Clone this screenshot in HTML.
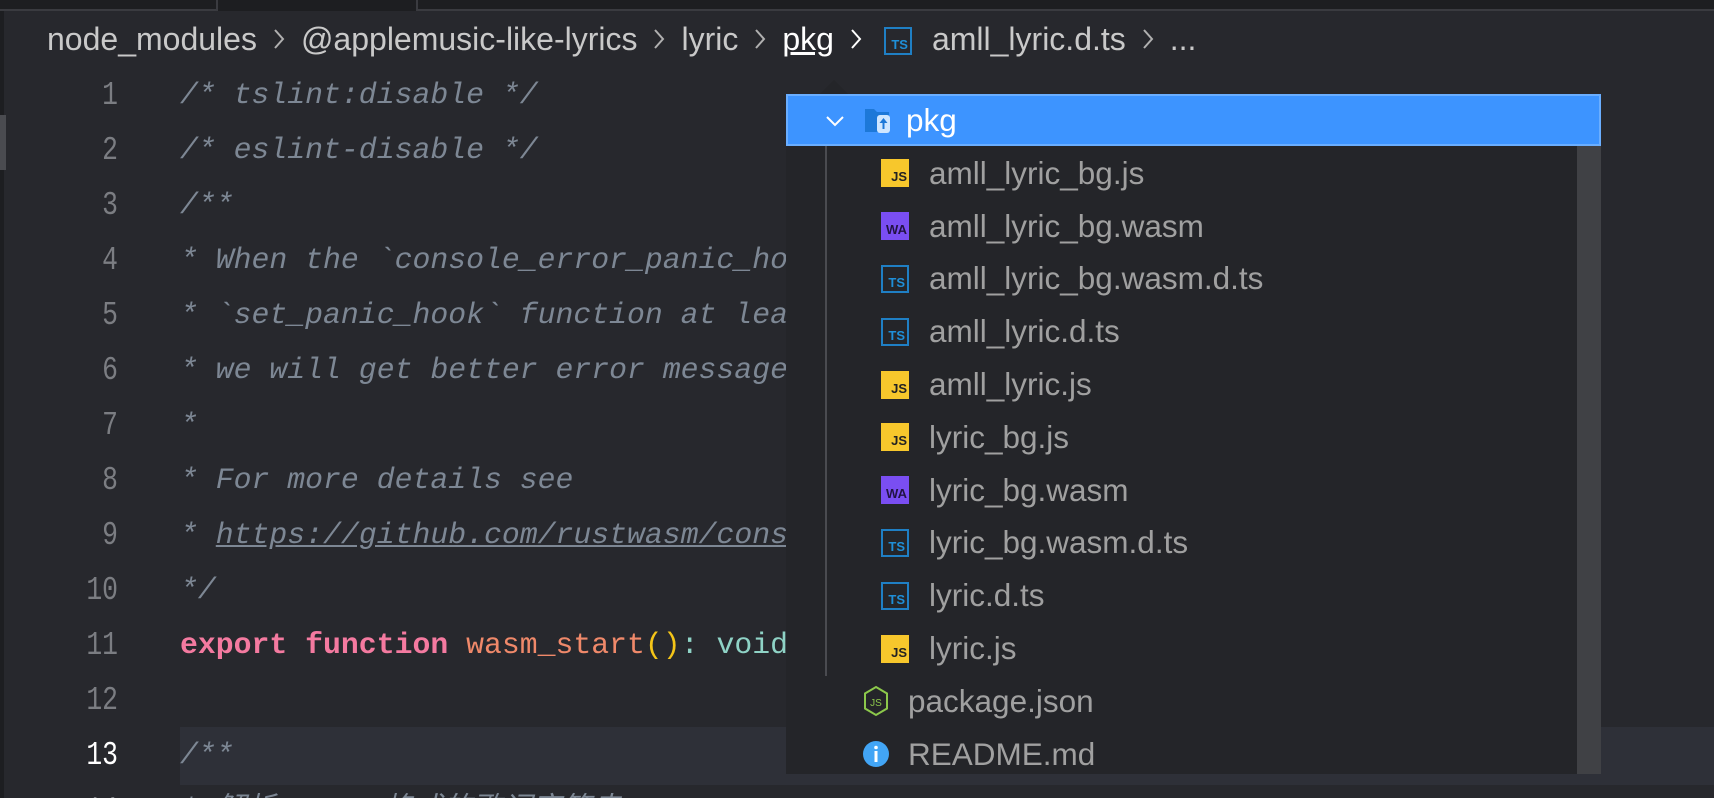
<!DOCTYPE html>
<html><head><meta charset="utf-8"><style>
*{margin:0;padding:0;box-sizing:border-box}
html,body{width:1714px;height:798px;overflow:hidden}
body{background:#27282d;position:relative;font-family:"Liberation Sans",sans-serif}
.abs{position:absolute}
.tabbar{left:0;top:0;width:1714px;height:11px;background:#1d1e21}
.crumb{top:19px;left:47px;height:40px;line-height:40px;font-size:32px;color:#c9c9c9;white-space:nowrap}
.sep{display:inline-block;width:44px;text-align:center;vertical-align:middle;position:relative;top:-3px}
.ln{left:30px;width:88px;height:730px;overflow:hidden;text-align:right;font-family:"Liberation Mono",monospace;font-size:33px;color:#7b7d82;transform:scaleX(.8);transform-origin:right}
.code{left:180px;height:730px;overflow:hidden;font-family:"Liberation Mono",monospace;font-style:italic;font-size:29.8px;color:#7d8794}
.code .row{white-space:pre}
.row{height:55px;line-height:55px}
.dd{left:786px;top:94px;width:815px;height:680px;background:#242529;overflow:hidden}
.sel{left:0;top:0;width:815px;height:52px;background:#3d94ff;border:2px solid #6aaeff}
.item{height:52.8px;line-height:52.8px;font-size:31.5px;color:#a0a0a0;white-space:nowrap}
.icon{display:inline-block;width:28px;height:28px;vertical-align:middle;margin-right:20px;position:relative;top:-2px;font-size:13px;font-weight:bold;text-align:right;line-height:36px;padding-right:2px;font-family:"Liberation Sans",sans-serif}
.js{background:#f7c72c;color:#222}
.ts{border:2px solid #1f7fc4;color:#1f8fd8;line-height:32px}
.wa{background:#7a4ef2;color:#221344}
</style></head><body>
<div class="abs tabbar"></div>
<div class="abs" style="left:0;top:0;width:218px;height:11px;border-right:2px solid #3a3b40;border-bottom:2px solid #3a3b40"></div>
<div class="abs" style="left:416px;top:0;width:1298px;height:11px;border-left:2px solid #3a3b40;border-bottom:2px solid #3a3b40"></div>
<div class="abs" style="left:0;top:11px;width:4px;height:787px;background:#1d1e21"></div>
<div class="abs" style="left:0;top:115px;width:6px;height:55px;background:#4a4b50"></div>

<div class="abs crumb">node_modules<span class="sep"><svg width="12" height="22" viewBox="0 0 12 22"><path d="M2 2l8 9-8 9" fill="none" stroke="#b0b0b0" stroke-width="2"/></svg></span>@applemusic-like-lyrics<span class="sep"><svg width="12" height="22" viewBox="0 0 12 22"><path d="M2 2l8 9-8 9" fill="none" stroke="#b0b0b0" stroke-width="2"/></svg></span>lyric<span class="sep"><svg width="12" height="22" viewBox="0 0 12 22"><path d="M2 2l8 9-8 9" fill="none" stroke="#b0b0b0" stroke-width="2"/></svg></span><span style="color:#fff;text-decoration:underline">pkg</span><span class="sep"><svg width="12" height="22" viewBox="0 0 12 22"><path d="M2 2l8 9-8 9" fill="none" stroke="#fff" stroke-width="2"/></svg></span><span class="icon ts" style="margin-right:20px;margin-left:6px;top:-1px">TS</span>amll_lyric.d.ts<span class="sep"><svg width="12" height="22" viewBox="0 0 12 22"><path d="M2 2l8 9-8 9" fill="none" stroke="#b0b0b0" stroke-width="2"/></svg></span>...</div>

<div class="abs" style="left:180px;top:727px;width:1534px;height:58px;background:#2e3038"></div>

<div class="abs ln" style="top:68px">
<div class="row">1</div><div class="row">2</div><div class="row">3</div><div class="row">4</div><div class="row">5</div><div class="row">6</div><div class="row">7</div><div class="row">8</div><div class="row">9</div><div class="row">10</div><div class="row">11</div><div class="row">12</div><div class="row" style="color:#fff">13</div><div class="row">14</div>
</div>
<div class="abs code" style="top:68px">
<div class="row">/* tslint:disable */</div>
<div class="row">/* eslint-disable */</div>
<div class="row">/**</div>
<div class="row">* When the `console_error_panic_hook`</div>
<div class="row">* `set_panic_hook` function at least</div>
<div class="row">* we will get better error messages</div>
<div class="row">*</div>
<div class="row">* For more details see</div>
<div class="row">* <span style="text-decoration:underline">https://github.com/rustwasm/console</span></div>
<div class="row">*/</div>
<div class="row" style="font-style:normal;font-weight:bold"><span style="color:#f47aa0">export function</span> <span style="color:#f0896a;font-weight:normal">wasm_start</span><span style="color:#f5c518;font-weight:normal">()</span><span style="color:#8fd3c6;font-weight:normal">: void</span></div>
<div class="row"> </div>
<div class="row">/**</div>
<div class="row" style="font-family:'Liberation Mono','Noto Sans CJK SC',monospace">* 解析 TTML 格式的歌词字符串</div>
</div>

<div class="abs" style="left:820px;top:80px;width:0;height:0;border-left:14px solid transparent;border-right:14px solid transparent;border-bottom:14px solid #242529"></div>
<div class="abs dd">
 <div class="abs sel"></div>
 <div class="abs" style="left:791px;top:52px;width:24px;height:628px;background:#404145"></div>
 <div class="abs" style="left:39px;top:52px;width:2px;height:530px;background:#4a4b50"></div>
 <div class="abs item" style="left:38px;top:0;color:#fff">
  <svg width="22" height="22" viewBox="0 0 22 22" style="vertical-align:middle;margin-right:18px;position:relative;top:-2px"><path d="M3 7 L11 15 L19 7" fill="none" stroke="#fff" stroke-width="2"/></svg><svg width="32" height="28" viewBox="0 0 32 28" style="vertical-align:middle;margin-right:10px;position:relative;top:-2px"><path d="M1 2h9l3 3h12v20H1z" fill="#1d78d8"/><rect x="13" y="8" width="13" height="18" rx="3" fill="#cfe6ff"/><path d="M19.5 11l-4 5h3v6h2v-6h3z" fill="#1d78d8"/></svg>pkg</div>
 <div class="abs" style="left:95px;top:52.8px">
  <div class="item"><span class="icon js">JS</span>amll_lyric_bg.js</div>
  <div class="item"><span class="icon wa">WA</span>amll_lyric_bg.wasm</div>
  <div class="item"><span class="icon ts">TS</span>amll_lyric_bg.wasm.d.ts</div>
  <div class="item"><span class="icon ts">TS</span>amll_lyric.d.ts</div>
  <div class="item"><span class="icon js">JS</span>amll_lyric.js</div>
  <div class="item"><span class="icon js">JS</span>lyric_bg.js</div>
  <div class="item"><span class="icon wa">WA</span>lyric_bg.wasm</div>
  <div class="item"><span class="icon ts">TS</span>lyric_bg.wasm.d.ts</div>
  <div class="item"><span class="icon ts">TS</span>lyric.d.ts</div>
  <div class="item"><span class="icon js">JS</span>lyric.js</div>
 </div>
 <div class="abs" style="left:76px;top:580.8px">
  <div class="item"><svg width="28" height="32" viewBox="0 0 28 32" style="vertical-align:middle;margin-right:18px;position:relative;top:-2px"><path d="M14 2L25 8.5v15L14 30 3 23.5v-15z" fill="none" stroke="#8cc84b" stroke-width="2"/><text x="14" y="21" font-size="10" fill="#8cc84b" text-anchor="middle" font-family="Liberation Sans">JS</text></svg>package.json</div>
  <div class="item"><svg width="28" height="28" viewBox="0 0 28 28" style="vertical-align:middle;margin-right:18px;position:relative;top:-2px"><circle cx="14" cy="14" r="13" fill="#42a5f5"/><rect x="12.5" y="11" width="3" height="11" fill="#fff"/><circle cx="14" cy="7.5" r="1.8" fill="#fff"/></svg>README.md</div>
 </div>
</div>
</body></html>
